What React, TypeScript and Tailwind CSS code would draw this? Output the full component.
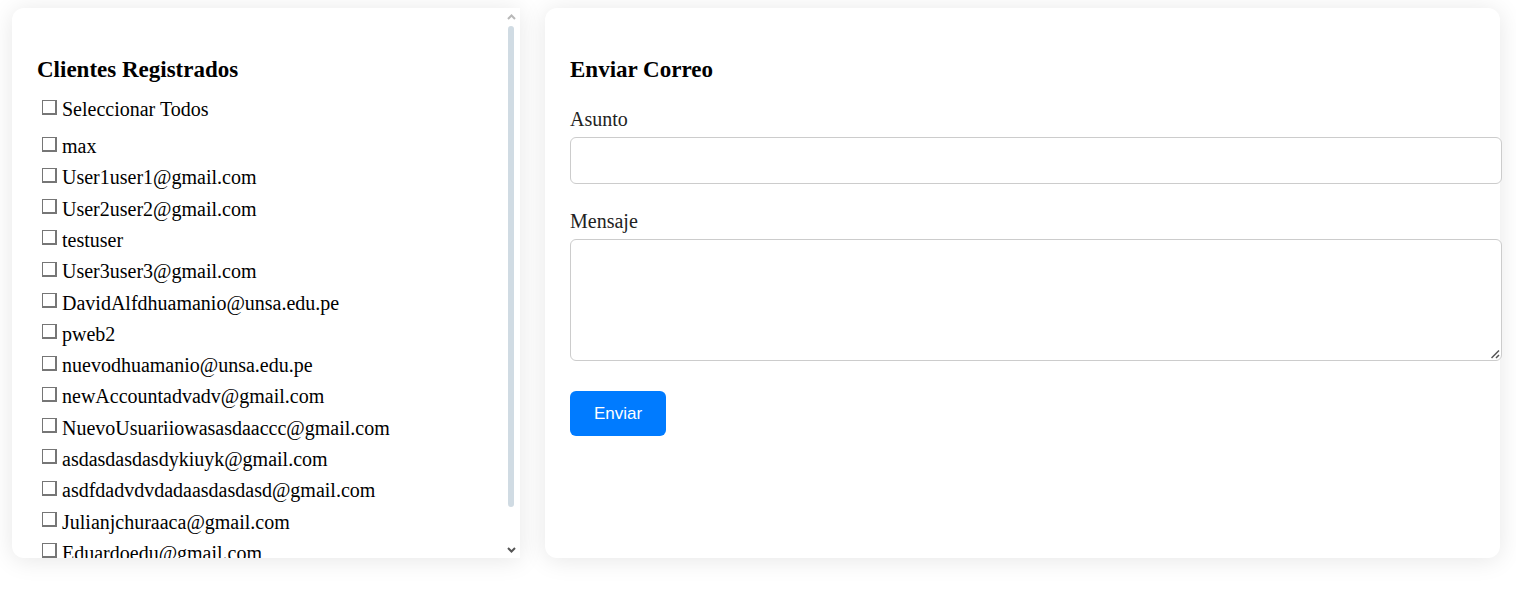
import { useState } from "react";

const clients = [
  "max",
  "User1user1@gmail.com",
  "User2user2@gmail.com",
  "testuser",
  "User3user3@gmail.com",
  "DavidAlfdhuamanio@unsa.edu.pe",
  "pweb2",
  "nuevodhuamanio@unsa.edu.pe",
  "newAccountadvadv@gmail.com",
  "NuevoUsuariiowasasdaaccc@gmail.com",
  "asdasdasdasdykiuyk@gmail.com",
  "asdfdadvdvdadaasdasdasd@gmail.com",
  "Julianjchuraaca@gmail.com",
  "Eduardoedu@gmail.com",
];

type CheckProps = { id: string; label: string; checked: boolean; onChange: () => void };

function CheckRow({ id, label, checked, onChange }: CheckProps) {
  return (
    <div className="flex items-center gap-[5px] pl-[5px]">
      <input
        id={id}
        type="checkbox"
        checked={checked}
        onChange={onChange}
        className="mb-[5px] size-[15px] shrink-0 appearance-none border-t border-r-2 border-b-2 border-l border-[#767676] bg-white checked:bg-[#0075ff]"
      />
      <label htmlFor={id} className="leading-[25px]">
        {label}
      </label>
    </div>
  );
}

export default function App() {
  const [selected, setSelected] = useState<string[]>([]);
  const all = selected.length === clients.length;
  const toggle = (name: string) =>
    setSelected((s) => (s.includes(name) ? s.filter((n) => n !== name) : [...s, name]));

  return (
    <main className="grid grid-cols-[508fr_955fr] gap-[25px] bg-white pt-2 pr-4 pb-9 pl-3 font-['Liberation_Serif','Times_New_Roman',serif] text-[20px] text-black">
      <section className="relative rounded-l-[12px] bg-white shadow-[0_2px_25px_rgba(0,0,0,0.1)]">
        <div className="h-[550px] overflow-y-auto rounded-l-[12px] p-[25px] [scrollbar-width:none]">
          <h3 className="mt-[23px] text-[23px] leading-[27px] font-bold">Clientes Registrados</h3>
          <div className="mt-[14px] mb-[9px]">
            <CheckRow
              id="all"
              label="Seleccionar Todos"
              checked={all}
              onChange={() => setSelected(all ? [] : clients)}
            />
          </div>
          <div className="grid h-[438px] auto-rows-fr">
            {clients.map((name, i) => (
              <CheckRow
                key={name}
                id={`client-${i}`}
                label={name}
                checked={selected.includes(name)}
                onChange={() => toggle(name)}
              />
            ))}
          </div>
        </div>
        <div
          aria-hidden="true"
          className="pointer-events-none absolute inset-y-0 right-[4px] flex w-[10px] flex-col items-center pt-[5px] pb-[4px]"
        >
          <svg className="h-[8px] w-[10px]" viewBox="0 0 10 8" fill="none" stroke="#b8b8b8" strokeWidth="2">
            <path d="M2 6 5.5 2.5 9 6" />
          </svg>
          <div className="mt-[5px] h-[481px] w-[6px] rounded-full bg-[#d0dbe3]" />
          <svg className="mt-auto h-[8px] w-[10px]" viewBox="0 0 10 8" fill="none" stroke="#555555" strokeWidth="2">
            <path d="M2 2 5.5 5.5 9 2" />
          </svg>
        </div>
      </section>

      <section className="rounded-[12px] bg-white p-[25px] shadow-[0_2px_25px_rgba(0,0,0,0.1)]">
        <h3 className="mt-[23px] text-[23px] leading-[27px] font-bold">Enviar Correo</h3>
        <form className="mt-6 flex flex-col items-start" onSubmit={(e) => e.preventDefault()}>
          <label htmlFor="subject" className="leading-[25px] text-[#222222]">
            Asunto
          </label>
          <input
            id="subject"
            type="text"
            className="mt-[5px] h-[47px] w-[calc(100%+27px)] rounded-[6px] border border-[#cccccc] bg-white px-3 outline-none"
          />
          <label htmlFor="message" className="mt-[25px] leading-[25px] text-[#222222]">
            Mensaje
          </label>
          <div className="relative mt-[5px] flex w-[calc(100%+27px)]">
            <textarea
              id="message"
              className="h-[122px] w-full resize-y rounded-[6px] border border-[#cccccc] bg-white p-3 outline-none [&::-webkit-resizer]:bg-transparent"
            />
            <svg
              aria-hidden="true"
              className="pointer-events-none absolute right-[2px] bottom-[2px] size-[9px]"
              viewBox="0 0 9 9"
              fill="none"
              stroke="#555555"
              strokeWidth="1.5"
            >
              <path d="M0.5 8 8 0.5M5 8 8 5" />
            </svg>
          </div>
          <button
            type="submit"
            className="mt-[30px] h-[45px] rounded-[6px] bg-[#007bff] px-6 font-['Liberation_Sans',Arial,sans-serif] text-[17px] leading-5 text-white"
          >
            Enviar
          </button>
        </form>
      </section>
    </main>
  );
}
